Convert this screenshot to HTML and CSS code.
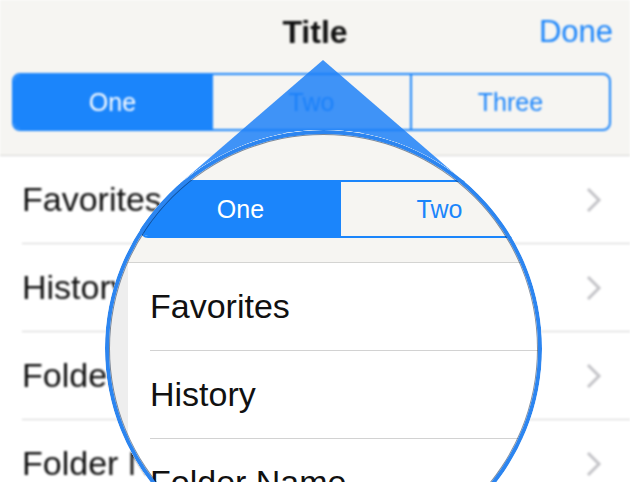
FILE: index.html
```html
<!DOCTYPE html>
<html>
<head>
  <title>Magnifier</title>
  <link rel="stylesheet" href="styles.css">
</head>
<body>
  <div class="screen">

    <!-- the page as seen through the glass: soft -->
    <div class="page blurred">
      <div class="bar">
        <div class="nav">
          <span></span>
          <span class="title">Title</span>
          <span class="done">Done</span>
        </div>
        <div class="segments">
          <div class="segment active">One</div>
          <div class="segment">Two</div>
          <div class="segment">Three</div>
        </div>
      </div>
      <div class="list">
        <div class="row"><div class="row-inner"><span>Favorites</span>
          <svg class="chevron" viewBox="0 0 16 26"><polyline points="2,2 13,13 2,24"/></svg></div></div>
        <div class="row"><div class="row-inner"><span>History</span>
          <svg class="chevron" viewBox="0 0 16 26"><polyline points="2,2 13,13 2,24"/></svg></div></div>
        <div class="row"><div class="row-inner"><span>Folder Name</span>
          <svg class="chevron" viewBox="0 0 16 26"><polyline points="2,2 13,13 2,24"/></svg></div></div>
        <div class="row"><div class="row-inner"><span>Folder Name</span>
          <svg class="chevron" viewBox="0 0 16 26"><polyline points="2,2 13,13 2,24"/></svg></div></div>
      </div>
    </div>

    <!-- the pointer of the loupe -->
    <svg class="pointer" width="630" height="482">
      <polygon points="323,60 180.5,183 323,348 465.5,183"/>
    </svg>

    <!-- the loupe, sharp copy of the page shifted -->
    <div class="lens">
      <div class="page sharp">
        <div class="bar">
          <div class="nav">
            <span></span>
            <span class="title">Title</span>
            <span class="done">Done</span>
          </div>
          <div class="segments">
            <div class="segment active">One</div>
            <div class="segment">Two</div>
            <div class="segment">Three</div>
          </div>
        </div>
        <div class="list">
          <div class="row"><div class="row-inner"><span>Favorites</span></div></div>
          <div class="row"><div class="row-inner"><span>History</span></div></div>
          <div class="row"><div class="row-inner"><span>Folder Name</span></div></div>
          <div class="row"><div class="row-inner"><span>Folder Name</span></div></div>
        </div>
      </div>
    </div>

  </div>
</body>
</html>
```

FILE: styles.css
```css
/* Base */
html, body {
  margin: 0;
  padding: 0;
  background: #fff;
}

body {
  font-family: 'Liberation Sans', Arial, sans-serif;
  color: #111;
  overflow: hidden;
}

.screen {
  position: relative;
  width: 630px;
  height: 482px;
  overflow: hidden;
}

/* Page */
.page {
  width: 630px;
  background: #fff;
}

.blurred {
  filter: blur(1.3px);
}

.bar {
  height: 155px;
  background: #f6f5f2;
  border-bottom: 1px solid #d4d4d2;
}

.nav {
  display: grid;
  grid-template-columns: 1fr auto 1fr;
  align-items: center;
  height: 64px;
}

.title {
  font-size: 32px;
  font-weight: bold;
  color: #111;
}

.done {
  justify-self: end;
  padding-right: 17px;
  font-size: 31px;
  color: #1b85fb;
}

.segments {
  display: flex;
  margin: 9px 0 0 12px;
  width: 599px;
  height: 58px;
  box-sizing: border-box;
  border: 2px solid #1b85fb;
  border-radius: 8px;
  overflow: hidden;
}

.segment {
  flex: 1;
  display: flex;
  align-items: center;
  justify-content: center;
  font-size: 25px;
  color: #1b85fb;
}

.segment + .segment {
  border-left: 2px solid #1b85fb;
}

.segment.active {
  background: #1b85fb;
  color: #fff;
}

.row {
  padding-left: 22px;
}

.row-inner {
  display: flex;
  align-items: center;
  justify-content: space-between;
  height: 87px;
  padding-right: 28px;
  border-bottom: 1px solid #d2d2d2;
  font-size: 34px;
}

.chevron {
  width: 16px;
  height: 26px;
}

.chevron polyline {
  fill: none;
  stroke: #c4c4c8;
  stroke-width: 3;
}

/* Loupe */
.pointer {
  position: absolute;
  left: 0;
  top: 0;
}

.pointer polygon {
  fill: rgba(27, 128, 248, 0.84);
}

.lens {
  position: absolute;
  left: 105px;
  top: 130px;
  width: 437px;
  height: 437px;
  border-radius: 50%;
  overflow: hidden;
  background: linear-gradient(#f6f5f2 0 133px, #eeeeee 133px);
}

.lens::after {
  content: "";
  position: absolute;
  left: 0;
  top: 0;
  right: 0;
  bottom: 0;
  border: 4px solid #2c85f0;
  border-radius: 50%;
  box-shadow: inset 0 0 0 1px rgba(10, 30, 60, 0.5);
}

.sharp {
  transform: translate(23px, -23px);
}
```
